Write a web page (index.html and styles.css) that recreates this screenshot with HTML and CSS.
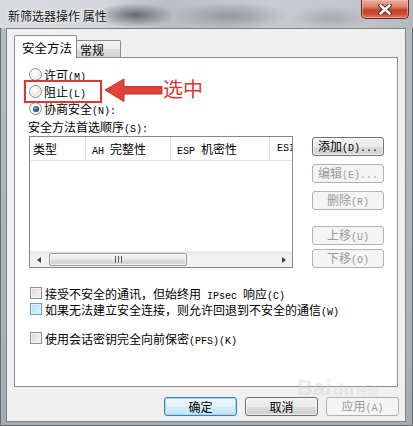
FILE: index.html
```html
<!DOCTYPE html>
<html lang="zh-CN">
<head>
<meta charset="utf-8">
<title>新筛选器操作 属性</title>
<link rel="stylesheet" href="styles.css">
</head>
<body>
<div class="window">
  <div class="titlebar">
    <span class="title">新筛选器操作 属性</span>
    <div class="close">
      <svg width="14" height="11" viewBox="0 0 14 11"><path d="M2.5 1.5 L11.5 9.5 M11.5 1.5 L2.5 9.5" stroke="#5a2018" stroke-width="4.6" stroke-linecap="round"/><path d="M2.5 1.5 L11.5 9.5 M11.5 1.5 L2.5 9.5" stroke="#ffffff" stroke-width="2.6" stroke-linecap="round"/></svg>
    </div>
  </div>
  <div class="client">
    <div class="tabs">
      <div class="tab active">安全方法</div>
      <div class="tab">常规</div>
    </div>
    <div class="panel">
      <div class="opts">
        <div class="row"><span class="radio"></span><span>许可<span class="m">(M)</span></span></div>
        <div class="row"><span class="radio"></span><span>阻止<span class="m">(L)</span></span></div>
        <div class="row"><span class="radio on"></span><span>协商安全<span class="m">(N):</span></span></div>
        <div class="row label"><span>安全方法首选顺序<span class="m">(S):</span></span></div>
      </div>
      <div class="listarea">
        <div class="listbox">
          <div class="lhead">
            <div class="col c1"><span>类型</span></div>
            <div class="col c2"><span><span class="m">AH </span>完整性</span></div>
            <div class="col c3"><span><span class="m">ESP </span>机密性</span></div>
            <div class="col c4"><span class="m">ESI</span></div>
          </div>
          <div class="lbody"></div>
          <div class="hscroll">
            <div class="sbtn"><span class="tri left"></span></div>
            <div class="track">
              <div class="thumb"><span class="grip"></span></div>
            </div>
            <div class="sbtn"><span class="tri right"></span></div>
          </div>
        </div>
        <div class="btncol">
          <button class="btn"><span>添加<span class="m">(D)...</span></span></button>
          <button class="btn dis"><span>编辑<span class="m">(E)...</span></span></button>
          <button class="btn dis"><span>删除<span class="m">(R)</span></span></button>
          <button class="btn dis gap"><span>上移<span class="m">(U)</span></span></button>
          <button class="btn dis"><span>下移<span class="m">(O)</span></span></button>
        </div>
      </div>
      <div class="checks">
        <div class="crow"><span class="cbox"></span><span>接受不安全的通讯，但始终用<span class="m"> IPsec </span>响应<span class="m">(C)</span></span></div>
        <div class="crow"><span class="cbox hover"></span><span>如果无法建立安全连接，则允许回退到不安全的通信<span class="m">(W)</span></span></div>
        <div class="crow sep"><span class="cbox"></span><span>使用会话密钥完全向前保密<span class="m">(PFS)(K)</span></span></div>
      </div>
    </div>
    <div class="footer">
      <button class="btn fbtn def">确定</button>
      <button class="btn fbtn">取消</button>
      <button class="btn fbtn dis"><span>应用<span class="m">(A)</span></span></button>
    </div>
  </div>

  <div class="redbox"></div>
  <svg class="arrow" width="60" height="26" viewBox="0 0 60 26">
    <path d="M1 12 L20 1 L20 8.5 L58 8.5 L58 16 L20 16 L20 23.5 Z" fill="#e0433a" stroke="#c8332b" stroke-width="1"/>
  </svg>
  <div class="callout">选中</div>
  <div class="wm"><span class="wm-a">Bai</span><span class="wm-b">du</span><span class="wm-c">经验</span></div>
</div>
</body>
</html>
```
FILE: styles.css
```css
* { box-sizing: border-box; }
html, body { margin: 0; padding: 0; }
body {
  width: 413px;
  height: 426px;
  overflow: hidden;
  background: #9ea3a8;
  font-family: "Noto Sans CJK SC", "Noto Sans", sans-serif;
  font-size: 12px;
  color: #000;
}
.m {
  font-family: "Liberation Mono", "DejaVu Sans Mono", monospace;
  font-size: 10px;
  white-space: pre;
}
.window {
  position: relative;
  width: 413px;
  height: 426px;
  background: linear-gradient(to bottom, #b7bcc1 0%, #aeb3b8 60%, #a7acb1 100%);
  border: 1px solid #6a6f74;
  border-top: none;
  display: flex;
  flex-direction: column;
}
.titlebar {
  height: 28px;
  flex: none;
  margin: 0 -1px;
  position: relative;
  background:
    radial-gradient(ellipse 40px 12px at 135px 15px, rgba(70,74,80,0.75), rgba(70,74,80,0) 100%),
    radial-gradient(ellipse 60px 14px at 230px 16px, rgba(110,114,120,0.55), rgba(110,114,120,0) 100%),
    radial-gradient(ellipse 40px 12px at 330px 18px, rgba(130,134,140,0.45), rgba(130,134,140,0) 100%),
    linear-gradient(to right, #d8dce0 0%, #d2d6da 25%, #b9bec3 40%, #c8ccd1 65%, #c3c7cc 85%, #b3b8bd 100%);
  display: flex;
  align-items: center;
  padding-left: 8px;
}
.title {
  font-size: 12px;
  color: #101010;
  text-shadow: 0 0 5px rgba(255,255,255,0.9), 0 0 2px rgba(255,255,255,0.9);
  margin-top: 2px;
}
.close {
  position: absolute;
  left: 361px;
  top: 0;
  width: 48px;
  height: 19px;
  border: 1px solid #5e2a22;
  border-top: none;
  border-radius: 0 0 5px 5px;
  background: linear-gradient(to bottom, #eaa99b 0%, #de8a76 35%, #c7432b 55%, #c94a32 75%, #e07d62 100%);
  box-shadow: inset 0 0 0 1px rgba(255,200,190,0.5);
  display: flex;
  align-items: center;
  justify-content: center;
}
.close svg { display: block; }
.client {
  margin-left: 5px;
  width: 400px;
  height: 394px;
  border: 1px solid #7d8287;
  background: #f0f0f0;
  display: flex;
  flex-direction: column;
}
.tabs {
  height: 28px;
  flex: none;
  display: flex;
  align-items: flex-end;
  padding-left: 7px;
  position: relative;
  z-index: 2;
}
.tab {
  height: 17px;
  width: 44px;
  border: 1px solid #898c95;
  border-bottom: none;
  border-left: none;
  border-radius: 0 2px 0 0;
  background: linear-gradient(to bottom, #f3f3f3 0%, #ebebeb 50%, #dedede 51%, #d4d4d4 100%);
  display: flex;
  align-items: center;
  padding-left: 3px;
  font-size: 12px;
}
.tab.active {
  height: 23px;
  width: 63px;
  border-left: 1px solid #898c95;
  border-radius: 2px 2px 0 0;
  background: #fff;
  padding-left: 7px;
  margin-bottom: -1px;
  font-size: 12.5px;
}
.panel {
  margin-left: 7px;
  width: 384px;
  height: 330px;
  flex: none;
  border: 1px solid #898c95;
  background: #fff;
  position: relative;
  z-index: 1;
}
.opts {
  padding: 8px 0 0 14px;
}
.row {
  height: 17px;
  display: flex;
  align-items: center;
  gap: 2px;
}
.row.label { margin-left: -1px; height: 18px; }
.radio {
  width: 13px;
  height: 13px;
  border-radius: 50%;
  border: 1px solid #8e8f8f;
  background: radial-gradient(circle at 40% 35%, #ffffff 0%, #f0f0f0 40%, #d4d4d4 100%);
  box-shadow: inset 0 0 0 1px #f4f4f4;
  flex: none;
  position: relative;
}
.radio.on::after {
  content: "";
  position: absolute;
  left: 2.5px;
  top: 2.5px;
  width: 6px;
  height: 6px;
  border-radius: 50%;
  background: radial-gradient(circle at 40% 35%, #7fb0d8 0%, #2a5486 50%, #1b3a63 100%);
}
.listarea {
  display: flex;
  margin-top: 1px;
  padding-left: 14px;
}
.listbox {
  width: 264px;
  height: 132px;
  border: 1px solid #828790;
  display: flex;
  flex-direction: column;
  overflow: hidden;
}
.lhead {
  height: 24px;
  flex: none;
  display: flex;
  border-bottom: 1px solid #e5e5e5;
  white-space: nowrap;
}
.col {
  display: flex;
  align-items: center;
  border-right: 1px solid #e5e5e5;
  padding-left: 6px;
  flex: none;
  font-size: 12px;
}
.c1 { width: 56px; padding-left: 3px; }
.c2 { width: 85px; }
.c3 { width: 99px; }
.c4 { width: 30px; border-right: none; padding-left: 7px; }
.lbody { flex: 1; }
.hscroll {
  height: 16px;
  flex: none;
  display: flex;
  background: linear-gradient(to bottom, #e7e7e7 0%, #f2f2f2 40%, #f2f2f2 100%);
  border-top: 1px solid #ececec;
}
.sbtn {
  width: 17px;
  display: flex;
  align-items: center;
  justify-content: center;
}
.tri {
  width: 0;
  height: 0;
  border-top: 3.5px solid transparent;
  border-bottom: 3.5px solid transparent;
}
.tri.left { border-right: 4px solid #404040; }
.tri.right { border-left: 4px solid #404040; }
.track {
  flex: 1;
  display: flex;
  align-items: stretch;
  padding: 1px 0 1px 2px;
}
.thumb {
  width: 138px;
  border: 1px solid #979797;
  border-radius: 2px;
  background: linear-gradient(to bottom, #f4f4f4 0%, #ececec 45%, #dcdcdc 55%, #d2d2d2 100%);
  box-shadow: inset 0 0 0 1px rgba(255,255,255,0.7);
  display: flex;
  align-items: center;
  justify-content: center;
}
.grip {
  width: 7px;
  height: 7px;
  background: repeating-linear-gradient(to right, #5c5c5c 0 1px, #e8e8e8 1px 3px);
}
.btncol {
  margin-left: 19px;
  width: 72px;
  display: flex;
  flex-direction: column;
  padding-top: 1px;
}
.btn {
  font-family: "Noto Sans CJK SC", "Noto Sans", sans-serif;
  font-size: 12px;
  color: #000;
  height: 19px;
  width: 72px;
  padding: 0;
  border: 1px solid #707070;
  border-radius: 3px;
  background: linear-gradient(to bottom, #f2f2f2 0%, #ebebeb 50%, #dddddd 51%, #cfcfcf 100%);
  box-shadow: inset 0 0 0 1px rgba(255,255,255,0.7);
  display: flex;
  align-items: center;
  justify-content: center;
  line-height: 1;
}
.btncol .btn { margin-bottom: 8px; }
.btncol .btn.gap { margin-top: 8px; margin-bottom: 4px; }
.btn.dis {
  color: #9a9a9a;
  border-color: #adb2b5;
  background: #f4f4f4;
  box-shadow: none;
}
.checks {
  margin-top: 9px;
  padding-left: 15px;
}
.crow {
  height: 16px;
  display: flex;
  align-items: center;
  gap: 3px;
  white-space: nowrap;
}
.crow.sep { margin-top: 13px; }
.cbox {
  width: 12px;
  height: 12px;
  flex: none;
  border: 1px solid #8e8f8f;
  background: linear-gradient(135deg, #d6d6d6 0%, #e8e8e8 50%, #f6f6f6 100%);
  box-shadow: inset 0 0 0 1px #f4f4f4;
}
.cbox.hover {
  border-color: #5fa4c9;
  background: linear-gradient(135deg, #a9dcf2 0%, #c3e8f7 50%, #e2f4fb 100%);
  box-shadow: inset 0 0 0 1px #dff2fb;
}
.footer {
  margin-top: 10px;
  display: flex;
  justify-content: flex-end;
  gap: 8px;
  padding-right: 6px;
}
.fbtn { width: 73px; height: 19px; }
.btn.def {
  border-color: #3c7fb1;
  background: linear-gradient(to bottom, #eef7fc 0%, #e3f2fa 50%, #d3ebf7 51%, #c6e4f4 100%);
  box-shadow: inset 0 0 0 1px #a7d9f2;
}
.redbox {
  position: absolute;
  left: 23px;
  top: 80px;
  width: 78px;
  height: 23px;
  border: 2px solid #d83a33;
  box-shadow: 0 0 1px rgba(200,50,40,0.5);
  z-index: 5;
}
.arrow {
  position: absolute;
  left: 103px;
  top: 78px;
  z-index: 5;
}
.callout {
  position: absolute;
  left: 162px;
  top: 75px;
  font-size: 20px;
  line-height: 28px;
  color: #d8382f;
  z-index: 5;
}
.wm {
  position: absolute;
  left: 296px;
  top: 376px;
  z-index: 6;
  color: rgba(205,205,205,0.4);
  font-family: "Liberation Sans", sans-serif;
  white-space: nowrap;
  pointer-events: none;
  line-height: 24px;
}
.wm-a { font-size: 22px; font-weight: bold; }
.wm-b { font-size: 17px; font-weight: bold; margin-left: 2px; }
.wm-c { font-family: "Noto Sans CJK SC", sans-serif; font-size: 11px; margin-left: 2px; }
```
